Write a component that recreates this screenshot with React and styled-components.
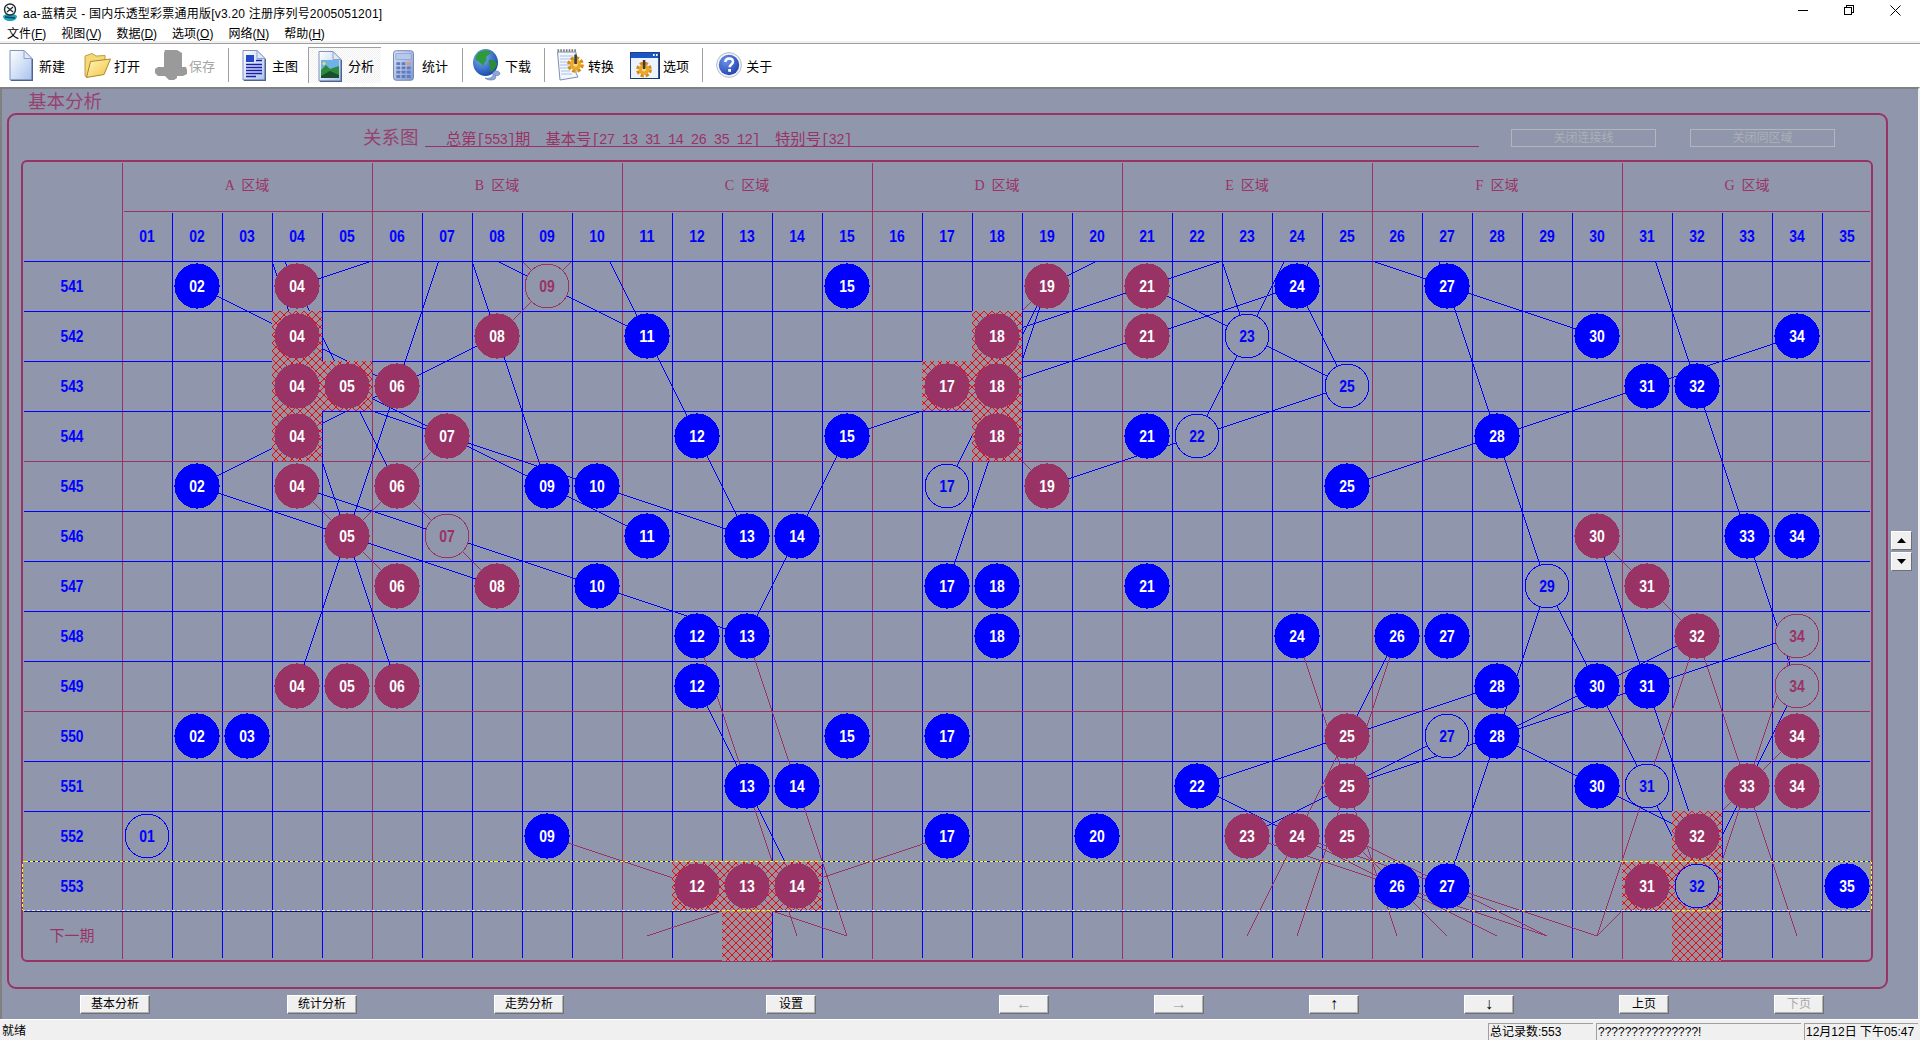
import React from "react";
import styled, { createGlobalStyle } from "styled-components";

const MAROON = "#993366";
const BLUE = "#0000ff";
const BG = "#9097ac";
const UI_FONT = '"Liberation Sans", "Noto Sans CJK SC", sans-serif';
const SONG_FONT = '"Liberation Serif", "Noto Sans CJK SC", serif';

const Global = createGlobalStyle`
  html, body { margin: 0; padding: 0; background: #fff; }
  body { font-family: ${UI_FONT}; font-size: 12px; color: #000; overflow: hidden; }
`;

const Window = styled.div`
  width: 1920px;
  height: 1040px;
  display: flex;
  flex-direction: column;
  overflow: hidden;
  background: #fff;
`;

/* ---------- title bar ---------- */
const TitleBar = styled.div`
  height: 23px;
  display: flex;
  align-items: center;
  padding: 0 19px 0 2px;
  gap: 5px;
`;
const TitleText = styled.div`
  flex: 1;
  font-size: 12px;
  letter-spacing: 0.22px;
  white-space: pre;
  padding-top: 1px;
`;
const WinControls = styled.div`
  display: flex;
  align-items: flex-start;
  gap: 35px;
  height: 100%;
  padding-top: 5px;
  box-sizing: border-box;
`;

const MenuBar = styled.div`
  height: 18px;
  display: flex;
  align-items: center;
  gap: 15px;
  padding-left: 7px;
  font-size: 12px;
`;
const MenuItem = styled.span`
  white-space: pre;
`;
const MenuRule = styled.div`
  height: 3px;
  box-sizing: border-box;
  background: #f0f0f0;
  border-bottom: 1px solid #a0a0a0;
`;

/* ---------- toolbar ---------- */
const Toolbar = styled.div`
  box-sizing: border-box;
  height: 43px;
  padding-bottom: 1px;
  display: flex;
  align-items: center;
  background: #fff;
  font-size: 13px;
`;
const ToolButton = styled.div`
  display: flex;
  align-items: center;
  flex: none;
  gap: ${(p) => p.$gap ?? 6}px;
  margin-left: ${(p) => p.$ml}px;
  color: ${(p) => (p.$disabled ? "#a6a6a6" : "#000")};
  white-space: pre;
  ${(p) =>
    p.$pressed
      ? `
    box-sizing: border-box;
    width: 73px;
    height: 36px;
    padding-left: 9px;
    border-top: 1px solid #a0a0a0;
    border-left: 1px solid #a0a0a0;
    background: repeating-conic-gradient(#f0f0f0 0 25%, #ffffff 0 50%) 0 0 / 2px 2px;
  `
      : ""}
`;
const ToolSep = styled.div`
  flex: none;
  width: 1px;
  height: 34px;
  background: #a0a0a0;
  margin-left: ${(p) => p.$ml}px;
`;

/* ---------- main area ---------- */
const Main = styled.div`
  flex: 1;
  display: flex;
  background: ${BG};
  border-top: 2px solid #808080;
  border-left: 2px solid #808080;
  border-right: 2px solid #f0f0f0;
  min-height: 0;
`;
const Workspace = styled.div`
  width: 1886px;
  display: flex;
  flex-direction: column;
`;
const ViewTitle = styled.div`
  height: 24px;
  line-height: 25px;
  padding-left: 26px;
  font-size: 18.5px;
  color: ${MAROON};
  opacity: 0.85;
`;
const Frame = styled.div`
  box-sizing: border-box;
  width: 1881px;
  height: 876px;
  margin-left: 5px;
  border: 2px solid ${MAROON};
  border-radius: 9px;
  padding: 14px 12px 0 12px;
  display: flex;
  flex-direction: column;
`;
const HeadRow = styled.div`
  height: 18px;
  display: flex;
  align-items: stretch;
  padding-left: 342px;
`;
const Heading = styled.div`
  font-size: 18.5px;
  line-height: 17px;
  color: ${MAROON};
  opacity: 0.85;
  width: 62px;
  white-space: pre;
`;
const Info = styled.div`
  box-sizing: border-box;
  width: 1054px;
  padding-left: 21px;
  border-bottom: 1px solid ${MAROON};
  color: ${MAROON};
  font-family: "Liberation Mono", "Noto Sans CJK SC", monospace;
  font-size: 14px;
  letter-spacing: -0.75px;
  line-height: 17px;
  white-space: pre;
`;
const Han = styled.span`
  font-family: "Noto Sans CJK SC", sans-serif;
  font-size: 15.3px;
  letter-spacing: 0;
`;
const GhostButton = styled.div`
  box-sizing: border-box;
  width: 145px;
  height: 18px;
  margin-left: ${(p) => p.$ml}px;
  border: 1px solid #b4b6bc;
  color: #adafb5;
  font-size: 12px;
  line-height: 16px;
  text-align: center;
`;
const Board = styled.div`
  box-sizing: border-box;
  width: 1852px;
  height: 802px;
  margin-top: 13px;
  border: 2px solid ${MAROON};
  border-radius: 6px;
`;
const Chart = styled.svg`
  display: block;
  overflow: visible;
  shape-rendering: crispEdges;
`;
const GridLine = styled.line`
  stroke: ${(p) => (p.$maroon ? MAROON : BLUE)};
  stroke-width: 1;
`;
const Link = styled.line`
  stroke: ${(p) => (p.$maroon ? MAROON : BLUE)};
  stroke-width: 1;
`;
const HatchBase = styled.rect`
  fill: #9096a6;
`;
const HatchTop = styled.rect`
  fill: url(#hatch);
`;
const Selection = styled.rect`
  fill: none;
  stroke: #ffff00;
  stroke-width: 1;
  stroke-dasharray: 3 2;
`;
const Ball = styled.circle`
  fill: ${(p) => (p.$hollow ? BG : p.$color)};
  stroke: ${(p) => (p.$hollow ? p.$color : "none")};
  stroke-width: 1;
`;
const BallNumber = styled.text`
  font-family: "Liberation Sans", sans-serif;
  font-weight: 700;
  font-size: 16px;
  text-anchor: middle;
  fill: ${(p) => p.$color};
  shape-rendering: auto;
`;
const AxisNumber = styled(BallNumber)`
  fill: ${BLUE};
`;
const ZoneLabel = styled.text`
  font-family: ${SONG_FONT};
  font-size: 14px;
  text-anchor: middle;
  fill: ${MAROON};
  white-space: pre;
`;
const NextLabel = styled.text`
  font-family: "Noto Sans CJK SC", sans-serif;
  font-size: 15px;
  text-anchor: middle;
  fill: ${MAROON};
`;

const ActionBar = styled.div`
  display: flex;
  padding-left: 78px;
  margin-top: 6px;
`;
const ActionButton = styled.div`
  box-sizing: border-box;
  width: ${(p) => p.$w}px;
  height: 19px;
  margin-left: ${(p) => p.$ml}px;
  background: #f0f0f0;
  border: 1px solid;
  border-color: #ffffff #707070 #707070 #ffffff;
  box-shadow: inset -1px -1px 0 #b0b0b0;
  color: ${(p) => (p.$disabled ? "#a8a8a8" : "#000")};
  font-size: ${(p) => (p.$arrow ? 16 : 12)}px;
  line-height: ${(p) => (p.$arrow ? 15 : 17)}px;
  text-align: center;
`;
const SideRail = styled.div`
  flex: 1;
  display: flex;
  flex-direction: column;
  gap: 2px;
  padding: 442px 0 0 3px;
`;
const SpinButton = styled.div`
  box-sizing: border-box;
  width: 21px;
  height: 19px;
  background: #f0f0f0;
  border: 1px solid;
  border-color: #ffffff #707070 #707070 #ffffff;
  display: flex;
  align-items: center;
  justify-content: center;
`;

/* ---------- status bar ---------- */
const StatusBar = styled.div`
  box-sizing: border-box;
  height: 21px;
  display: flex;
  align-items: flex-end;
  background: #f0f0f0;
  padding: 2px 2px 0 2px;
  font-size: 12px;
  border-top: 1px solid #ffffff;
`;
const StatusText = styled.div`
  flex: 1;
  line-height: 17px;
`;
const StatusCell = styled.div`
  box-sizing: border-box;
  width: ${(p) => p.$w}px;
  height: 17px;
  margin-left: ${(p) => p.$ml}px;
  border-top: 1px solid #a0a0a0;
  border-left: 1px solid #a0a0a0;
  padding-left: 1px;
  line-height: 17px;
  white-space: pre;
  overflow: hidden;
`;

/* ---------- data ---------- */
const rows = [
  [541, [[2, "b"], [4, "m"], [9, "hm"], [15, "b"], [19, "m"], [21, "m"], [24, "b"], [27, "b"]]],
  [542, [[4, "m"], [8, "m"], [11, "b"], [18, "m"], [21, "m"], [23, "hb"], [30, "b"], [34, "b"]]],
  [543, [[4, "m"], [5, "m"], [6, "m"], [17, "m"], [18, "m"], [25, "hb"], [31, "b"], [32, "b"]]],
  [544, [[4, "m"], [7, "m"], [12, "b"], [15, "b"], [18, "m"], [21, "b"], [22, "hb"], [28, "b"]]],
  [545, [[2, "b"], [4, "m"], [6, "m"], [9, "b"], [10, "b"], [17, "hb"], [19, "m"], [25, "b"]]],
  [546, [[5, "m"], [7, "hm"], [11, "b"], [13, "b"], [14, "b"], [30, "m"], [33, "b"], [34, "b"]]],
  [547, [[6, "m"], [8, "m"], [10, "b"], [17, "b"], [18, "b"], [21, "b"], [29, "hb"], [31, "m"]]],
  [548, [[12, "b"], [13, "b"], [18, "b"], [24, "b"], [26, "b"], [27, "b"], [32, "m"], [34, "hm"]]],
  [549, [[4, "m"], [5, "m"], [6, "m"], [12, "b"], [28, "b"], [30, "b"], [31, "b"], [34, "hm"]]],
  [550, [[2, "b"], [3, "b"], [15, "b"], [17, "b"], [25, "m"], [27, "hb"], [28, "b"], [34, "m"]]],
  [551, [[13, "b"], [14, "b"], [22, "b"], [25, "m"], [30, "b"], [31, "hb"], [33, "m"], [34, "m"]]],
  [552, [[1, "hb"], [9, "b"], [17, "b"], [20, "b"], [23, "m"], [24, "m"], [25, "m"], [32, "m"]]],
  [553, [[12, "m"], [13, "m"], [14, "m"], [26, "b"], [27, "b"], [31, "m"], [32, "hb"], [35, "b"]]],
];

const hatches = [
  [4, 542], [4, 543], [5, 543], [4, 544],
  [18, 542], [17, 543], [18, 543], [18, 544],
  [32, 552], [12, 553], [13, 553], [14, 553], [31, 553], [32, 553],
  [13, 554], [32, 554],
];

const blueLinks = [
  [2,541,4,542],[4,541,7,540],[3,539,4,542],[3,539,4,541],[4,541,5,543],[4,542,6,543],[4,544,6,543],
  [2,545,4,544],[4,543,7,544],[5,543,7,544],[5,543,6,545],[4,543,5,546],[6,543,5,546],[6,543,7,540],
  [8,542,7,539],[6,543,8,542],[7,540,9,541],[9,541,11,542],[10,540,11,542],[8,542,9,545],[7,544,9,545],
  [7,544,10,545],[9,545,11,546],[10,545,13,546],[2,545,5,546],[4,545,7,546],[5,546,8,547],[7,546,10,547],
  [5,546,4,549],[5,546,6,549],[10,547,13,548],[11,542,12,544],[12,544,13,546],[14,546,15,544],[14,546,13,548],
  [15,544,18,543],[18,542,21,541],[18,543,21,542],[19,545,22,544],[19,541,18,543],[19,541,18,544],[19,541,21,540],
  [18,543,17,545],[18,544,17,547],[21,541,24,540],[21,541,23,542],[21,542,24,541],[23,542,24,540],[22,539,23,542],
  [22,544,23,542],[22,544,25,543],[23,542,25,543],[24,541,25,543],[25,539,24,541],[25,545,28,544],[28,544,31,543],
  [31,543,34,542],[27,541,30,542],[24,540,27,541],[27,541,28,544],[26,538,27,541],[31,540,32,543],[32,543,33,546],
  [28,544,29,547],[33,546,34,549],[30,546,31,549],[29,547,30,549],[29,547,28,550],[26,548,25,550],[28,549,25,550],
  [25,550,22,551],[22,551,24,552],[25,551,23,552],[27,550,25,551],[28,550,25,551],[30,549,28,550],[31,549,28,550],
  [28,550,30,551],[28,550,27,553],[32,548,30,549],[34,548,31,549],[30,549,31,551],[31,549,32,552],[30,551,32,552],
  [31,551,32,553],[33,551,32,553],[33,551,34,549],[12,549,13,551],[13,551,14,553],
];

const maroonLinks = [
  [9,541,8,540],[9,541,10,540],[9,541,8,542],[6,545,7,544],[6,545,5,546],[4,545,5,546],[6,545,7,546],[7,546,8,547],
  [5,546,6,547],[19,541,18,542],[18,544,19,545],[30,546,31,547],[31,547,32,548],[34,548,33,551],[34,550,33,551],
  [33,551,32,552],[32,548,33,551],[32,548,31,551],[33,551,34,554],[33,551,32,554],[31,551,30,554],[31,553,30,554],
  [27,553,30,554],[27,553,29,554],[26,553,29,554],[26,553,28,554],[26,553,27,554],[25,551,26,554],[25,552,27,553],
  [24,552,26,553],[23,552,26,553],[24,552,27,553],[25,552,26,553],[25,551,24,554],[24,552,23,554],[24,548,25,551],
  [26,548,25,551],[25,550,24,552],[12,548,13,551],[13,548,14,551],[13,551,14,554],[14,551,15,554],[12,553,15,554],
  [14,553,11,554],[9,552,12,553],[14,553,17,552],
];

const colLeft = (c) => 122 + 50 * (c - 1);
const rowTop = (r) => 261 + 50 * (r - 541);
const cx = (c) => colLeft(c) + 25;
const cy = (r) => rowTop(r) + 25;
const pad = (n) => String(n).padStart(2, "0");
const zones = ["A", "B", "C", "D", "E", "F", "G"];
const boundaryCols = [1, 6, 11, 16, 21, 26, 31];
const purpleRows = [545, 550];
const allCols = Array.from({ length: 35 }, (_, i) => i + 1);
const allRows = Array.from({ length: 14 }, (_, i) => 541 + i);

const hatchPixels = Array.from({ length: 8 }, (_, i) => `M${i} ${i}h1v1h-1zM${7 - i} ${i}h1v1h-1z`).join("");

function LotteryChart() {
  return (
    <Chart width="1848" height="798" viewBox="23 162 1848 798">
      <defs>
        <pattern id="hatch" width="8" height="8" patternUnits="userSpaceOnUse" x="272" y="311">
          <path d={hatchPixels} fill="#ff0000" />
        </pattern>
        <clipPath id="plot">
          <rect x="23" y="262" width="1848" height="698" />
        </clipPath>
      </defs>

      {/* grid */}
      <GridLine $maroon x1="124" x2="1870" y1="211.5" y2="211.5" />
      {allCols.map((c) =>
        boundaryCols.includes(c) ? (
          <GridLine key={c} $maroon x1={colLeft(c) + 0.5} x2={colLeft(c) + 0.5} y1="163" y2="959" />
        ) : (
          <GridLine key={c} x1={colLeft(c) + 0.5} x2={colLeft(c) + 0.5} y1="213" y2="958" />
        )
      )}
      {allRows.map((r) => (
        <GridLine key={r} $maroon={purpleRows.includes(r)} x1="24" x2="1870" y1={rowTop(r) + 0.5} y2={rowTop(r) + 0.5} />
      ))}

      {/* headers */}
      {zones.map((z, i) => (
        <ZoneLabel key={z} x={247 + 250 * i} y="190">{`${z}  区域`}</ZoneLabel>
      ))}
      {allCols.map((c) => (
        <AxisNumber key={c} x={cx(c)} y="242" textLength="15.5" lengthAdjust="spacingAndGlyphs">
          {pad(c)}
        </AxisNumber>
      ))}
      {rows.map(([id]) => (
        <AxisNumber key={id} x="72" y={cy(id) + 6} textLength="23" lengthAdjust="spacingAndGlyphs">
          {id}
        </AxisNumber>
      ))}
      <NextLabel x="72" y="941">下一期</NextLabel>

      {/* connection lines */}
      <g clipPath="url(#plot)">
        {blueLinks.map(([a, r, b, s], i) => (
          <Link key={i} x1={cx(a)} y1={cy(r)} x2={cx(b)} y2={cy(s)} />
        ))}
        {maroonLinks.map(([a, r, b, s], i) => (
          <Link key={i} $maroon x1={cx(a)} y1={cy(r)} x2={cx(b)} y2={cy(s)} />
        ))}
      </g>

      {/* marked cells */}
      {hatches.map(([c, r]) => (
        <g key={`${c}-${r}`}>
          <HatchBase x={colLeft(c)} y={rowTop(r)} width="50" height="50" />
          <HatchTop x={colLeft(c)} y={rowTop(r)} width="50" height="50" />
        </g>
      ))}

      <Selection x="22.5" y="861.5" width="1849" height="49" rx="2" />

      {/* balls */}
      {rows.map(([id, balls]) =>
        balls.map(([c, kind]) => {
          const hollow = kind[0] === "h";
          const color = kind.endsWith("m") ? MAROON : BLUE;
          const text = hollow ? color : "#ffffff";
          return (
            <g key={`${id}-${c}`}>
              <Ball cx={cx(c)} cy={cy(id)} r={hollow ? 22 : 22.6} $hollow={hollow} $color={color} />
              <BallNumber x={cx(c)} y={cy(id) + 6} $color={text} textLength="15.5" lengthAdjust="spacingAndGlyphs">
                {pad(c)}
              </BallNumber>
            </g>
          );
        })
      )}
    </Chart>
  );
}

/* ---------- icons ---------- */
const PageShape = ({ id, from = "#ffffff", to = "#a9c2ee" }) => (
  <>
    <defs>
      <linearGradient id={id} x1="0" y1="0" x2="1" y2="1">
        <stop offset="0" stopColor={from} />
        <stop offset="1" stopColor={to} />
      </linearGradient>
    </defs>
    <path d="M1 1.5H15L23 9.5V31H1Z" fill={`url(#${id})`} stroke="#7f93bd" strokeWidth="1" />
    <path d="M15 1.5V9.5H23Z" fill="#dfe8f8" stroke="#8ea2c8" strokeWidth="1" />
    <path d="M23.5 10V31.5H2" fill="none" stroke="#4f6391" strokeWidth="1.6" />
  </>
);

const IconNew = () => (
  <svg width="24" height="32" viewBox="0 0 24 32"><PageShape id="pgNew" /></svg>
);
const IconOpen = () => (
  <svg width="27" height="27" viewBox="0 0 27 27">
    <defs>
      <linearGradient id="fold" x1="0" y1="0" x2="1" y2="1">
        <stop offset="0" stopColor="#fff7c0" />
        <stop offset="1" stopColor="#f2c23e" />
      </linearGradient>
    </defs>
    <path d="M1 4L8 1.5L12 4L21 3.5L21 9L7 11L3 25L1 24Z" fill="#f7d877" stroke="#a98a2a" strokeWidth="0.8" />
    <path d="M6.5 9.5L26.5 7L20 22.5L2.5 25.5Z" fill="url(#fold)" stroke="#a98a2a" strokeWidth="1" />
  </svg>
);
const IconSave = () => (
  <svg width="32" height="30" viewBox="0 0 32 30">
    <path d="M10 0H22L27 3V17H31L32 20V24L28 26H22V28L19 30H14L10 26H3L0 23V19L3 17H9V3Z" fill="#9a9a9a" />
  </svg>
);
const IconMain = () => (
  <svg width="24" height="32" viewBox="0 0 24 32">
    <PageShape id="pgMain" />
    <rect x="4" y="6" width="8" height="7" fill="#2747c9" />
    <path d="M14 11.5H20M4 15.5H20M4 18.5H20M4 21.5H20M4 24.5H20M4 27.5H14" stroke="#1c1ca8" strokeWidth="1.4" />
  </svg>
);
const IconAnalysis = () => (
  <svg width="24" height="32" viewBox="0 0 24 32">
    <PageShape id="pgPic" />
    <rect x="3" y="10" width="18" height="18" fill="#6fb2e8" />
    <path d="M3 20L8 15L12 19L21 16V28H3Z" fill="#2c8a3a" />
    <path d="M3 26L12 21L21 25V28H3Z" fill="#17502a" />
    <circle cx="6" cy="13.5" r="1.6" fill="#f5d95f" />
  </svg>
);
const IconCalc = () => (
  <svg width="21" height="33" viewBox="0 0 22 33">
    <defs>
      <linearGradient id="calc" x1="0" y1="0" x2="1" y2="1">
        <stop offset="0" stopColor="#dbe5f7" />
        <stop offset="1" stopColor="#7f97cf" />
      </linearGradient>
    </defs>
    <rect x="0.5" y="1" width="21" height="31" rx="3" fill="url(#calc)" stroke="#6f82b3" />
    <rect x="3" y="4" width="16" height="6" fill="#b6c9ec" stroke="#7f93c2" strokeWidth="0.6" />
    {[0, 1, 2, 3].map((r) =>
      [0, 1, 2].map((c) => (
        <rect key={`${r}${c}`} x={3.5 + c * 5.5} y={13 + r * 4.5} width="4" height="3" rx="0.5"
          fill={c === 2 && r === 0 ? "#e2986a" : "#5f7bbd"} />
      ))
    )}
  </svg>
);
const IconGlobe = () => (
  <svg width="28" height="32" viewBox="0 0 28 32">
    <defs>
      <radialGradient id="sea" cx="0.35" cy="0.3" r="0.8">
        <stop offset="0" stopColor="#7fb7f5" />
        <stop offset="1" stopColor="#0d3fa6" />
      </radialGradient>
    </defs>
    <ellipse cx="12.5" cy="13.5" rx="12.5" ry="13.5" fill="url(#sea)" />
    <path d="M6 3C10 1 15 1 18 3C17 6 14 6 13 9C15 11 11 13 10 17C8 14 5 12 3 11C2 8 4 5 6 3Z" fill="#2e9a3a" />
    <path d="M16 11C19 10 23 12 24 15C22 20 19 23 17 23C18 19 15 15 16 11Z" fill="#2a8c36" />
    <path d="M20 23C23 21 27 22 27 25C26 27 23 27 22 26C24 29 22 31 18 31C15 31 13 30 12 29C16 30 21 29 20 23Z" fill="#8ea8d6" stroke="#5a77ad" strokeWidth="0.6" />
  </svg>
);
const Gear = ({ x, y, s = 1 }) => (
  <g transform={`translate(${x} ${y}) scale(${s})`}>
    <circle r="6.6" fill="none" stroke="#d88a12" strokeWidth="3.4" strokeDasharray="3.2 2" />
    <circle r="5.6" fill="#eca726" />
    <circle r="2.2" fill="#f7d88a" />
    <rect x="-1.2" y="-10" width="2.6" height="9.5" fill="#3c3c3c" />
  </g>
);
const IconConvert = () => (
  <svg width="28" height="32" viewBox="0 0 28 32">
    <path d="M1.5 3H20V24L22 28L4 31Z" fill="#f2f6ff" stroke="#7f8fb0" />
    <path d="M1.5 1.5H20" stroke="#777" strokeWidth="2.4" strokeDasharray="1.6 1.2" />
    <path d="M4 7H17M4 10H17M4 13H14M4 16H14M4 19H14M5 22H14M5 25H16" stroke="#a8c2e2" strokeWidth="1" />
    <Gear x={19.5} y={15.5} />
  </svg>
);
const IconOptions = () => (
  <svg width="30" height="27" viewBox="0 0 30 27">
    <rect x="0.5" y="0.5" width="29" height="26" fill="#ecf3fc" stroke="#1f3f86" />
    <rect x="1" y="1" width="28" height="5" fill="#1b57c4" />
    <path d="M29 2V27H2" stroke="#14346f" strokeWidth="1.6" fill="none" />
    <rect x="23" y="2" width="1.6" height="2" fill="#fff" />
    <rect x="26" y="2" width="1.6" height="2" fill="#fff" />
    <Gear x={14} y={17.5} s={0.95} />
  </svg>
);
const IconHelp = () => (
  <svg width="26" height="26" viewBox="0 0 26 26">
    <defs>
      <radialGradient id="helpB" cx="0.35" cy="0.3" r="0.8">
        <stop offset="0" stopColor="#6d93ea" />
        <stop offset="1" stopColor="#1d3fb0" />
      </radialGradient>
    </defs>
    <circle cx="13" cy="13" r="12.4" fill="#f2f4f8" stroke="#b5bac4" />
    <circle cx="13" cy="13" r="10.2" fill="url(#helpB)" />
    <path d="M9.3 10C9.5 7.6 11.2 6.5 13.2 6.5C15.4 6.5 17 7.8 17 9.8C17 12.5 13.6 12.6 13.6 15.2" fill="none" stroke="#fff" strokeWidth="2.4" />
    <rect x="12.2" y="17" width="2.8" height="2.8" fill="#fff" />
  </svg>
);
const IconApp = () => (
  <svg width="16" height="18" viewBox="0 0 16 18">
    <path d="M1 13C4 10 12 10 15 13C15 16 12 18 8 18C4 18 1 16 1 13Z" fill="#1fa3b7" />
    <circle cx="8" cy="6.5" r="5.5" fill="#ffffff" stroke="#1e2a2e" strokeWidth="1.4" />
    <path d="M5 4L11 9M11 4L5 9" stroke="#1e2a2e" strokeWidth="1.3" />
    <path d="M3 14L13 15" stroke="#0c3f6e" strokeWidth="1.4" />
  </svg>
);

const IconMinimize = () => (
  <svg width="11" height="11" viewBox="0 0 11 11" shapeRendering="crispEdges">
    <path d="M0 5.5H10" stroke="#000" />
  </svg>
);
const IconRestore = () => (
  <svg width="11" height="11" viewBox="0 0 11 11" shapeRendering="crispEdges">
    <path d="M0.5 2.5H7.5V9.5H0.5ZM2.5 2.5V0.5H9.5V7.5H7.5" fill="none" stroke="#000" />
  </svg>
);
const IconClose = () => (
  <svg width="11" height="11" viewBox="0 0 11 11">
    <path d="M0.5 0.5L10.5 10.5M10.5 0.5L0.5 10.5" stroke="#000" />
  </svg>
);
const SpinUp = () => (
  <svg width="9" height="5" viewBox="0 0 9 5"><polygon points="4.5,0 9,5 0,5" fill="#000" /></svg>
);
const SpinDown = () => (
  <svg width="9" height="5" viewBox="0 0 9 5"><polygon points="0,0 9,0 4.5,5" fill="#000" /></svg>
);

const Mnemonic = ({ label, k }) => (
  <MenuItem>
    {label}(<u>{k}</u>)
  </MenuItem>
);

export default function App() {
  return (
    <>
      <Global />
      <Window>
        <TitleBar>
          <IconApp />
          <TitleText>aa-蓝精灵 - 国内乐透型彩票通用版[v3.20 注册序列号2005051201]</TitleText>
          <WinControls>
            <IconMinimize />
            <IconRestore />
            <IconClose />
          </WinControls>
        </TitleBar>
        <MenuBar>
          <Mnemonic label="文件" k="F" />
          <Mnemonic label="视图" k="V" />
          <Mnemonic label="数据" k="D" />
          <Mnemonic label="选项" k="O" />
          <Mnemonic label="网络" k="N" />
          <Mnemonic label="帮助" k="H" />
        </MenuBar>
        <MenuRule />
        <Toolbar>
          <ToolButton $ml={9}><IconNew />新建</ToolButton>
          <ToolButton $ml={19} $gap={3}><IconOpen />打开</ToolButton>
          <ToolButton $ml={15} $gap={2} $disabled><IconSave />保存</ToolButton>
          <ToolSep $ml={13} />
          <ToolButton $ml={13}><IconMain />主图</ToolButton>
          <ToolButton $ml={10} $pressed><IconAnalysis />分析</ToolButton>
          <ToolButton $ml={12} $gap={8}><IconCalc />统计</ToolButton>
          <ToolSep $ml={14} />
          <ToolButton $ml={10} $gap={4}><IconGlobe />下载</ToolButton>
          <ToolSep $ml={13} />
          <ToolButton $ml={11} $gap={4}><IconConvert />转换</ToolButton>
          <ToolButton $ml={16} $gap={3}><IconOptions />选项</ToolButton>
          <ToolSep $ml={13} />
          <ToolButton $ml={13} $gap={4}><IconHelp />关于</ToolButton>
        </Toolbar>
        <Main>
          <Workspace>
            <ViewTitle>基本分析</ViewTitle>
            <Frame>
              <HeadRow>
                <Heading>关系图</Heading>
                <Info>
                  <Han>总第</Han>[553]<Han>期</Han>{"  "}<Han>基本号</Han>[27 13 31 14 26 35 12]{"  "}<Han>特别号</Han>[32]
                </Info>
                <GhostButton $ml={32}>关闭连接线</GhostButton>
                <GhostButton $ml={34}>关闭同区域</GhostButton>
              </HeadRow>
              <Board>
                <LotteryChart />
              </Board>
            </Frame>
            <ActionBar>
              <ActionButton $w={70} $ml={0}>基本分析</ActionButton>
              <ActionButton $w={70} $ml={137}>统计分析</ActionButton>
              <ActionButton $w={70} $ml={137}>走势分析</ActionButton>
              <ActionButton $w={50} $ml={202}>设置</ActionButton>
              <ActionButton $w={50} $ml={183} $disabled $arrow>←</ActionButton>
              <ActionButton $w={50} $ml={105} $disabled $arrow>→</ActionButton>
              <ActionButton $w={50} $ml={105} $arrow>↑</ActionButton>
              <ActionButton $w={50} $ml={105} $arrow>↓</ActionButton>
              <ActionButton $w={50} $ml={105}>上页</ActionButton>
              <ActionButton $w={50} $ml={105} $disabled>下页</ActionButton>
            </ActionBar>
          </Workspace>
          <SideRail>
            <SpinButton><SpinUp /></SpinButton>
            <SpinButton><SpinDown /></SpinButton>
          </SideRail>
        </Main>
        <StatusBar>
          <StatusText>就绪</StatusText>
          <StatusCell $w={105} $ml={0}>总记录数:553</StatusCell>
          <StatusCell $w={205} $ml={3}>???????????????!</StatusCell>
          <StatusCell $w={114} $ml={3}>12月12日 下午05:47</StatusCell>
        </StatusBar>
      </Window>
    </>
  );
}
